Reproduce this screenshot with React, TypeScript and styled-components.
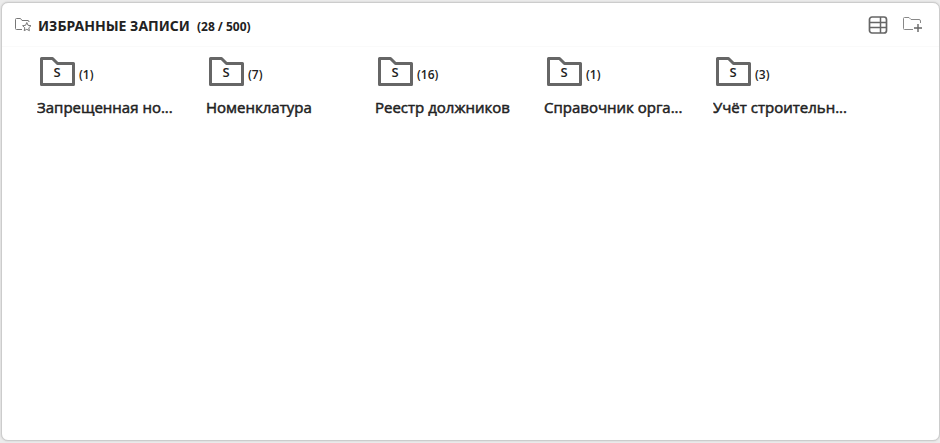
import React from "react";
import styled, { createGlobalStyle } from "styled-components";

const GlobalStyle = createGlobalStyle`
  * { box-sizing: border-box; }
  body {
    margin: 0;
    background: #ececec;
    color: #222222;
    font-family: "Open Sans", "Noto Sans", sans-serif;
  }
`;

const Page = styled.main`
  display: flex;
  min-height: 100vh;
  padding: 2px 0 2px 1px;
`;

const Panel = styled.section`
  flex: 1;
  min-width: 0;
  background: #ffffff;
  border: 1px solid #cccccc;
  border-radius: 7px;
  box-shadow: 0 0 2px #c4c4c4;
`;

const Header = styled.header`
  display: flex;
  align-items: center;
  height: 44px;
  padding: 0 16px 0 12px;
  border-bottom: 1px solid #fafafa;
`;

const Heading = styled.div`
  display: flex;
  align-items: baseline;
  gap: 7px;
  margin-left: 6px;
  padding-top: 3px;
  font-family: "Noto Sans", sans-serif;
  line-height: 20px;
  font-weight: 700;
  white-space: nowrap;
`;

const Title = styled.h1`
  margin: 0;
  font-size: 14px;
`;

const Total = styled.span`
  font-size: 12px;
`;

const Actions = styled.div`
  display: flex;
  align-items: center;
  gap: 15px;
  margin-left: auto;
`;

const IconButton = styled.button`
  display: flex;
  padding: 0;
  border: 0;
  background: none;
  cursor: pointer;
`;

const FolderGrid = styled.ul`
  display: grid;
  grid-template-columns: repeat(auto-fill, 140px);
  gap: 16px 29px;
  margin: 0;
  padding: 8px 35px;
  list-style: none;
`;

const FolderLink = styled.a`
  display: block;
  color: inherit;
  text-decoration: none;
`;

const FolderTop = styled.span`
  display: flex;
  align-items: center;
  gap: 4px;
  height: 32px;
  padding-left: 2px;
`;

const FolderMark = styled.span`
  display: grid;
  width: 36px;
  height: 32px;

  > * { grid-area: 1 / 1; }
`;

const FolderLetter = styled.span`
  padding-top: 3px;
  text-align: center;
  font-size: 13px;
  line-height: 28px;
  font-weight: 600;
`;

const FolderCount = styled.span`
  padding-top: 8px;
  font-size: 12px;
  line-height: 20px;
  font-weight: 600;
`;

const FolderName = styled.span`
  display: block;
  margin-top: 10px;
  overflow: hidden;
  font-size: 15px;
  line-height: 20px;
  font-weight: 500;
  -webkit-text-stroke: 0.5px currentColor;
  text-overflow: ellipsis;
  white-space: nowrap;
`;

const StarFolderIcon = () => (
  <svg width="18" height="16" viewBox="0 0 18 16" fill="none" stroke="#777777" aria-hidden="true">
    <path d="M8 12.5H2.5Q1.5 12.5 1.5 11.5V2.5Q1.5 1.5 2.5 1.5H6.5L8 3.5H14Q15 3.5 15 5" />
    <path fill="#ffffff" strokeLinejoin="round" d="m12.8 5.5 1.2 2.8 3 .4-2.2 2.1.6 2.9-2.6-1.4-2.6 1.4.6-2.9-2.2-2.1 3-.4Z" />
  </svg>
);

const TableIcon = () => (
  <svg width="20" height="18" viewBox="0 0 20 18" fill="none" stroke="#666666" strokeWidth="1.7" aria-hidden="true">
    <rect x="1.5" y="1" width="17" height="16" rx="2.5" />
    <path strokeWidth="1.5" d="M2 6.5H18M2 11.5H18M12.5 1V17" />
  </svg>
);

const AddFolderIcon = () => (
  <svg width="20" height="18" viewBox="0 0 20 18" fill="none" stroke="#888888" aria-hidden="true">
    <path d="M10 13.5H1.5Q.5 13.5 .5 12.5V2.5Q.5 1.5 1.5 1.5H6L8 3.5H16Q17.5 3.5 17.5 5V7" />
    <path stroke="#666666" strokeWidth="1.4" d="M11 12H19M15 8V16" />
  </svg>
);

const FolderIcon = () => (
  <svg width="36" height="32" viewBox="0 0 36 32" fill="none" aria-hidden="true">
    <path d="M2.5 29.5V3.5H13.5L18.5 8.5H34.5V29.5Z" stroke="#666666" strokeWidth="3" strokeLinejoin="round" />
  </svg>
);

const folders = [
  { name: "Запрещенная но...", count: 1 },
  { name: "Номенклатура", count: 7 },
  { name: "Реестр должников", count: 16 },
  { name: "Справочник орга...", count: 1 },
  { name: "Учёт строительн...", count: 3 },
];

export default function App() {
  return (
    <>
      <GlobalStyle />
      <Page>
        <Panel>
          <Header>
            <StarFolderIcon />
            <Heading>
              <Title>ИЗБРАННЫЕ ЗАПИСИ</Title>
              <Total>(28 / 500)</Total>
            </Heading>
            <Actions>
              <IconButton type="button" aria-label="Таблица">
                <TableIcon />
              </IconButton>
              <IconButton type="button" aria-label="Добавить папку">
                <AddFolderIcon />
              </IconButton>
            </Actions>
          </Header>
          <FolderGrid>
            {folders.map((folder) => (
              <li key={folder.name}>
                <FolderLink href="#">
                  <FolderTop>
                    <FolderMark>
                      <FolderIcon />
                      <FolderLetter>S</FolderLetter>
                    </FolderMark>
                    <FolderCount>({folder.count})</FolderCount>
                  </FolderTop>
                  <FolderName>{folder.name}</FolderName>
                </FolderLink>
              </li>
            ))}
          </FolderGrid>
        </Panel>
      </Page>
    </>
  );
}
